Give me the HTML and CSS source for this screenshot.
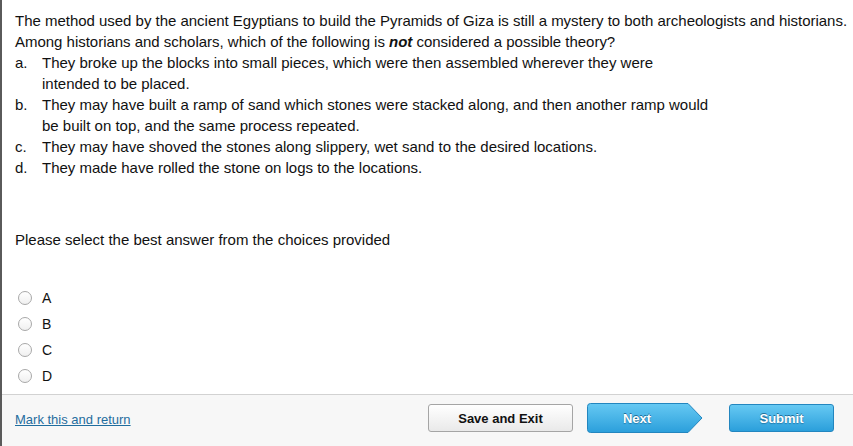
FILE: index.html
```html
<!DOCTYPE html>
<html>
<head>
<meta charset="utf-8">
<link rel="stylesheet" href="styles.css">
</head>
<body>
<div class="page">
  <main class="content">
    <p class="q">The method used by the ancient Egyptians to build the Pyramids of Giza is still a mystery to both archeologists and historians.<br>Among historians and scholars, which of the following is <b><i>not</i></b> considered a possible theory?</p>
    <ol class="opts">
      <li><span class="lbl">a.</span><span class="txt">They broke up the blocks into small pieces, which were then assembled wherever they were<br>intended to be placed.</span></li>
      <li><span class="lbl">b.</span><span class="txt">They may have built a ramp of sand which stones were stacked along, and then another ramp would<br>be built on top, and the same process repeated.</span></li>
      <li><span class="lbl">c.</span><span class="txt">They may have shoved the stones along slippery, wet sand to the desired locations.</span></li>
      <li><span class="lbl">d.</span><span class="txt">They made have rolled the stone on logs to the locations.</span></li>
    </ol>
    <p class="prompt">Please select the best answer from the choices provided</p>
    <div class="choices">
      <label class="choice"><span class="radio"></span>A</label>
      <label class="choice"><span class="radio"></span>B</label>
      <label class="choice"><span class="radio"></span>C</label>
      <label class="choice"><span class="radio"></span>D</label>
    </div>
  </main>
  <footer class="foot">
    <a class="mark" href="#">Mark this and return</a>
    <div class="btns">
      <span class="btn save">Save and Exit</span>
      <span class="btn next">
        <svg class="next-bg" width="116" height="30" viewBox="0 0 116 30">
          <defs>
            <linearGradient id="g1" x1="0" y1="0" x2="0" y2="1">
              <stop offset="0" stop-color="#66c9f3"/>
              <stop offset="1" stop-color="#2b9fdb"/>
            </linearGradient>
          </defs>
          <path d="M3.5 0.5 H101 L115 15 L101 29.5 H3.5 Q0.5 29.5 0.5 26.5 V3.5 Q0.5 0.5 3.5 0.5 Z" fill="url(#g1)" stroke="#2386bf" stroke-width="1"/>
        </svg>
        <span class="next-txt">Next</span>
      </span>
      <span class="btn submit">Submit</span>
    </div>
  </footer>
</div>
</body>
</html>
```

FILE: styles.css
```css
html, body {
  margin: 0;
  padding: 0;
  background: #fff;
}
.page {
  width: 853px;
  height: 446px;
  display: flex;
  flex-direction: column;
  border-left: 2px solid #5a5a5a;
  box-sizing: border-box;
  font-family: "Liberation Sans", Arial, sans-serif;
  color: #111;
  font-size: 15px;
}
.content {
  flex: 1;
  padding: 10px 0 0 13px;
}
.q {
  margin: 0;
  line-height: 21px;
  white-space: nowrap;
  letter-spacing: -0.02px;
}
.opts {
  list-style: none;
  margin: 0;
  padding: 0;
}
.opts li {
  display: flex;
  line-height: 21px;
  white-space: nowrap;
}
.lbl {
  width: 27px;
  flex: none;
}
.prompt {
  margin: 51px 0 0 0;
  line-height: 21px;
}
.choices {
  display: flex;
  flex-direction: column;
  gap: 8px;
  margin-top: 39px;
}
.choice {
  display: flex;
  align-items: center;
  height: 18px;
  font-size: 14px;
}
.radio {
  width: 12px;
  height: 12px;
  border: 1px solid #a8a8a8;
  border-radius: 50%;
  background: linear-gradient(#ffffff, #f0f0f0);
  margin: 0 10px 0 3px;
  box-sizing: content-box;
}
.foot {
  height: 52px;
  flex: none;
  box-sizing: border-box;
  border-top: 1px solid #d2d2d2;
  background: #f7f7f7;
  display: flex;
  align-items: flex-start;
  justify-content: space-between;
  padding: 8px 0 0 13px;
}
.mark {
  color: #1f6d9e;
  font-size: 13px;
  text-decoration: underline;
  margin-top: 9px;
}
.btns {
  display: flex;
  align-items: center;
  margin-right: 19px;
}
.btn {
  display: flex;
  align-items: center;
  justify-content: center;
  height: 28px;
  box-sizing: border-box;
  font-size: 13px;
  font-weight: bold;
}
.save {
  width: 145px;
  border: 1px solid #a5a5a5;
  border-radius: 3px;
  background: linear-gradient(#ffffff, #e9e9e9);
  color: #111;
}
.next {
  position: relative;
  width: 116px;
  height: 30px;
  margin-left: 14px;
  justify-content: flex-start;
}
.next-bg {
  position: absolute;
  left: 0;
  top: 0;
}
.next-txt {
  position: relative;
  width: 100px;
  text-align: center;
  color: #fff;
  text-shadow: 0 -1px 0 rgba(0, 60, 100, 0.6), 0 1px 1px rgba(0, 60, 100, 0.4);
}
.submit {
  width: 105px;
  margin-left: 26px;
  border: 1px solid #2386bf;
  border-radius: 3px;
  background: linear-gradient(#66c9f3, #2b9fdb);
  color: #fff;
  text-shadow: 0 -1px 0 rgba(0, 60, 100, 0.6), 0 1px 1px rgba(0, 60, 100, 0.4);
}
```
